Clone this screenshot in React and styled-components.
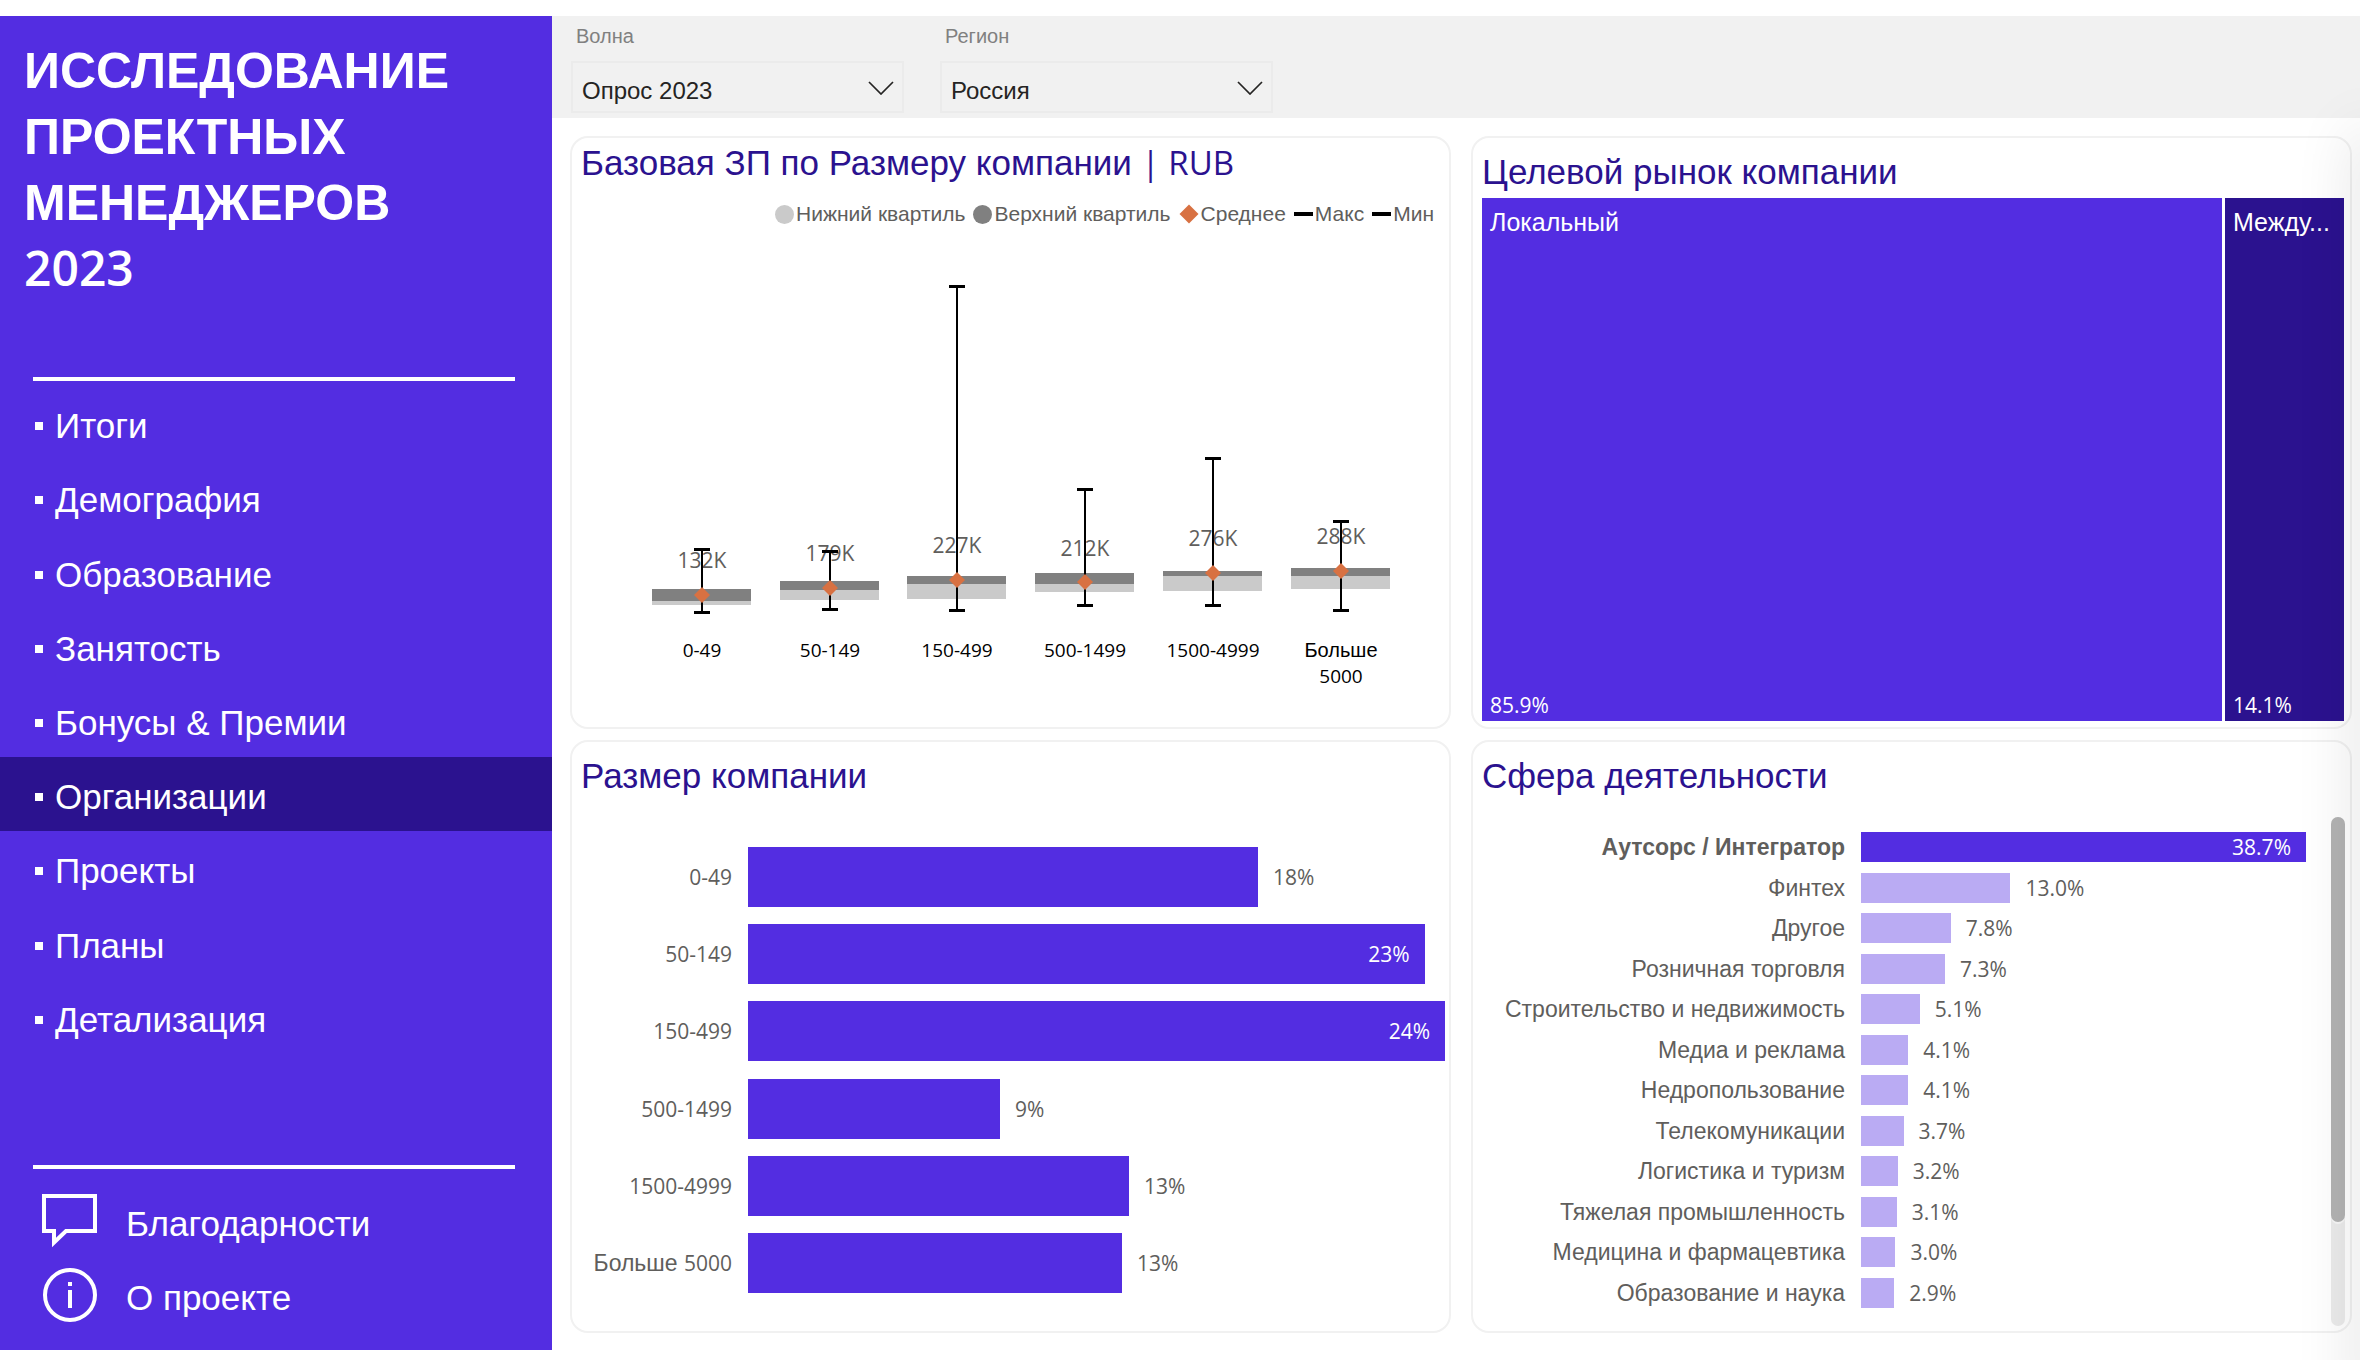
import React from "react";
import styled, { createGlobalStyle } from "styled-components";

const colors = {
  primary: "#532de1",
  dark: "#2b128f",
  light: "#baabf3",
  text: "#605e5c",
  line: "#f1f1f1",
};

const cyrillic = `"Liberation Sans", sans-serif`;
const digits = `"Open Sans", "Noto Sans", sans-serif`;

const menu = [
  "Итоги",
  "Демография",
  "Образование",
  "Занятость",
  "Бонусы & Премии",
  "Организации",
  "Проекты",
  "Планы",
  "Детализация",
];

const sizes = [
  { prefix: "", label: "0-49", share: 17.56, value: "18%" },
  { prefix: "", label: "50-149", share: 23.3, value: "23%", inside: true },
  { prefix: "", label: "150-499", share: 24, value: "24%", inside: true },
  { prefix: "", label: "500-1499", share: 8.68, value: "9%" },
  { prefix: "", label: "1500-4999", share: 13.12, value: "13%" },
  { prefix: "Больше ", label: "5000", share: 12.88, value: "13%" },
];

const spheres = [
  { label: "Аутсорс / Интегратор", value: 38.7, active: true },
  { label: "Финтех", value: 13.0 },
  { label: "Другое", value: 7.8 },
  { label: "Розничная торговля", value: 7.3 },
  { label: "Строительство и недвижимость", value: 5.1 },
  { label: "Медиа и реклама", value: 4.1 },
  { label: "Недропользование", value: 4.1 },
  { label: "Телекомуникации", value: 3.7 },
  { label: "Логистика и туризм", value: 3.2 },
  { label: "Тяжелая промышленность", value: 3.1 },
  { label: "Медицина и фармацевтика", value: 3.0 },
  { label: "Образование и наука", value: 2.9 },
];

const boxes = [
  { label: "0-49", x: 130, max: 310, q3: 349, q2: 361, q1: 365, min: 373, avg: 355, text: "132K", ty: 328 },
  { label: "50-149", x: 258, max: 312, q3: 341, q2: 350, q1: 360, min: 370, avg: 348, text: "179K", ty: 321 },
  { label: "150-499", x: 385, max: 47, q3: 336, q2: 344, q1: 359, min: 371, avg: 340, text: "227K", ty: 313 },
  { label: "500-1499", x: 513, max: 250, q3: 333, q2: 344, q1: 352, min: 366, avg: 342, text: "212K", ty: 316 },
  { label: "1500-4999", x: 641, max: 219, q3: 331, q2: 336, q1: 351, min: 366, avg: 333, text: "276K", ty: 306 },
  { label: "Больше", second: "5000", x: 769, max: 282, q3: 328, q2: 336, q1: 349, min: 371, avg: 331, text: "288K", ty: 304 },
];

const BoxPlot = () => (
  <Plot viewBox="0 0 877 480" role="img" aria-label="Базовая ЗП">
    {boxes.map((b) => (
      <g key={b.label}>
        <PlotValue x={b.x} y={b.ty}>
          {b.text}
        </PlotValue>
        <rect x={b.x - 50} y={b.q3} width="99" height={b.q2 - b.q3} fill="#808080" />
        <rect x={b.x - 50} y={b.q2} width="99" height={b.q1 - b.q2} fill="#cacaca" />
        <rect x={b.x - 1} y={b.max} width="2" height={b.min - b.max} />
        <rect x={b.x - 8} y={b.max - 2} width="16" height="3" />
        <rect x={b.x - 8} y={b.min - 2} width="16" height="3" />
        <path
          d={`M${b.x} ${b.avg - 8}l8 8l-8 8l-8 -8z`}
          fill="#d87142"
        />
        <PlotLabel x={b.x} y="417" $cyr={Boolean(b.second)}>
          {b.label}
        </PlotLabel>
        {b.second && (
          <PlotLabel x={b.x} y="443">
            {b.second}
          </PlotLabel>
        )}
      </g>
    ))}
  </Plot>
);

const Filter = ({ id, label, value }) => (
  <Field>
    <label htmlFor={id}>{label}</label>
    <div className="box">
      <select id={id} defaultValue={value}>
        <option>{value}</option>
      </select>
      <svg width="26" height="14" viewBox="0 0 26 14" fill="none" stroke="#252423" strokeWidth="1.7">
        <path d="M1 1l12 12l12 -12" />
      </svg>
    </div>
  </Field>
);

const App = () => {
  return (
    <Page>
      <GlobalStyle />
      <Sidebar>
        <h1>
          Исследование
          <br />
          проектных
          <br />
          менеджеров
          <br />
          <b>2023</b>
        </h1>
        <Divider />
        <Menu>
          {menu.map((item) => (
            <MenuLink key={item} href="#" $active={item === "Организации"}>
              {item}
            </MenuLink>
          ))}
        </Menu>
        <Divider />
        <Footer>
          <a href="#">
            <svg width="56" height="60" viewBox="0 0 56 60" fill="none" stroke="#fff" strokeWidth="4">
              <path d="M2 2h51v35H24L12 48.500V37H2z" />
            </svg>
            Благодарности
          </a>
          <a href="#">
            <svg width="56" height="60" viewBox="0 0 56 60" fill="none" stroke="#fff" strokeWidth="4">
              <circle cx="28" cy="27" r="25" />
              <path d="M28 22v18M28 14v4" />
            </svg>
            О проекте
          </a>
        </Footer>
      </Sidebar>
      <Content>
        <Filters>
          <Filter id="wave" label="Волна" value="Опрос 2023" />
          <Filter id="region" label="Регион" value="Россия" />
        </Filters>
        <Cards>
          <Card>
            <Title>
              Базовая ЗП по Размеру компании <Latin>| RUB</Latin>
            </Title>
            <Legend>
              <li>
                <Dot $color="#cacaca" />
                Нижний квартиль
              </li>
              <li>
                <Dot $color="#808080" />
                Верхний квартиль
              </li>
              <li>
                <svg width="20" height="20" viewBox="0 0 20 20">
                  <path d="M10 0.500l9.500 9.500l-9.500 9.500l-9.500 -9.500z" fill="#d87142" />
                </svg>
                Среднее
              </li>
              <li>
                <Dash />
                Макс
              </li>
              <li>
                <Dash />
                Мин
              </li>
            </Legend>
            <BoxPlot />
          </Card>
          <Card>
            <Title $low>Целевой рынок компании</Title>
            <Treemap>
              <Tile $color={colors.primary}>
                <span>Локальный</span>
                <Num>85.9%</Num>
              </Tile>
              <Tile $color={colors.dark}>
                <span>Между...</span>
                <Num>14.1%</Num>
              </Tile>
            </Treemap>
          </Card>
          <Card>
            <Title $low>Размер компании</Title>
            <SizeChart>
              {sizes.map((s) => (
                <SizeRow key={s.label}>
                  <BarLabel>
                    {s.prefix}
                    <Num>{s.label}</Num>
                  </BarLabel>
                  <Track>
                    <Bar $color={colors.primary} $height={60} style={{ width: `${(s.share / 24) * 100}%` }}>
                      {s.inside && <Num>{s.value}</Num>}
                    </Bar>
                    {!s.inside && <Num>{s.value}</Num>}
                  </Track>
                </SizeRow>
              ))}
            </SizeChart>
          </Card>
          <Card>
            <Title $low>Сфера деятельности</Title>
            <SphereBody>
              <SphereChart>
                {spheres.map((s) => (
                  <SphereRow key={s.label}>
                    <BarLabel $active={s.active}>{s.label}</BarLabel>
                    <Track>
                      <Bar
                        $color={s.active ? colors.primary : colors.light}
                        $height={30}
                        style={{ width: `${(s.value / 38.7) * 100}%` }}
                      >
                        {s.active && <Num>{s.value.toFixed(1)}%</Num>}
                      </Bar>
                      {!s.active && <Num>{s.value.toFixed(1)}%</Num>}
                    </Track>
                  </SphereRow>
                ))}
              </SphereChart>
              <Scrollbar>
                <div />
              </Scrollbar>
            </SphereBody>
          </Card>
        </Cards>
      </Content>
      <EdgeShadow />
    </Page>
  );
};

export default App;

const GlobalStyle = createGlobalStyle`
  * {
    box-sizing: border-box;
  }
  body {
    margin: 0;
    background: #fff;
    color: ${colors.text};
    font-family: ${cyrillic};
    overflow-x: hidden;
  }
  a {
    color: inherit;
    text-decoration: none;
  }
`;

const Page = styled.div`
  position: relative;
  display: flex;
  padding: 16px 0 10px;
  overflow: hidden;
`;

const Sidebar = styled.aside`
  flex: 0 0 552px;
  display: flex;
  flex-direction: column;
  background: ${colors.primary};
  color: #fff;
  h1 {
    margin: 0;
    padding: 22px 24px 0;
    height: 361px;
    font-size: 50px;
    line-height: 66px;
    font-weight: 700;
    text-transform: uppercase;
  }
  b {
    font-family: ${digits};
    font-size: 48px;
    font-weight: 600;
    line-height: 1;
  }
`;

const Divider = styled.hr`
  flex: none;
  width: 482px;
  height: 4px;
  margin: 0 0 0 33px;
  border: 0;
  background: #fff;
`;

const Menu = styled.nav`
  display: flex;
  flex-direction: column;
  height: 784px;
  padding: 5px 0 111px;
`;

const MenuLink = styled.a`
  flex: 1;
  display: flex;
  align-items: center;
  gap: 12px;
  padding: 6px 0 0 35px;
  font-size: 35px;
  background: ${(p) => (p.$active ? colors.dark : "transparent")};
  &::before {
    content: "";
    width: 8px;
    height: 8px;
    background: #fff;
  }
`;

const Footer = styled.div`
  padding: 18px 0 15px 42px;
  font-size: 35px;
  a {
    display: flex;
    align-items: center;
    gap: 28px;
    height: 74px;
  }
`;

const Content = styled.main`
  flex: 1;
  min-width: 0;
`;

const Filters = styled.div`
  display: flex;
  gap: 36px;
  height: 102px;
  padding: 8px 0 0 19px;
  background: ${colors.line};
`;

const Field = styled.div`
  width: 333px;
  label {
    display: block;
    height: 37px;
    padding-left: 5px;
    font-size: 20px;
    line-height: 24px;
    color: #808080;
  }
  .box {
    position: relative;
  }
  select {
    appearance: none;
    width: 100%;
    height: 52px;
    padding: 6px 9px 0;
    border: 2px solid #ebebeb;
    border-radius: 0;
    background: transparent;
    color: #252423;
    font-family: ${cyrillic};
    font-size: 24px;
  }
  svg {
    position: absolute;
    right: 10px;
    top: 20px;
    pointer-events: none;
  }
`;

const Cards = styled.div`
  display: grid;
  grid-template-columns: 1fr 1fr;
  grid-auto-rows: 593px;
  gap: 11px 20px;
  padding: 18px 8px 0 18px;
`;

const Card = styled.section`
  display: flex;
  flex-direction: column;
  min-width: 0;
  border: 2px solid ${colors.line};
  border-radius: 18px;
`;

const Title = styled.h2`
  margin: 0;
  padding: ${(p) => (p.$low ? "13px" : "4px")} 9px 0;
  font-size: 35px;
  line-height: 42px;
  font-weight: 400;
  color: ${colors.dark};
`;

const Latin = styled.span`
  font-family: ${digits};
  font-size: 33px;
  line-height: 1;
`;

const Num = styled.span`
  font-family: ${digits};
  font-size: 21px;
  line-height: 28px;
`;

const Legend = styled.ul`
  display: flex;
  justify-content: flex-end;
  gap: 8px;
  margin: 0;
  padding: 18px 15px 0;
  list-style: none;
  font-size: 21px;
  line-height: 24px;
  li {
    display: flex;
    align-items: center;
    gap: 2px;
  }
`;

const Dot = styled.i`
  width: 19px;
  height: 19px;
  border-radius: 50%;
  background: ${(p) => p.$color};
`;

const Dash = styled.i`
  width: 19px;
  height: 4px;
  background: #000;
`;

const Plot = styled.svg`
  display: block;
  width: 100%;
  margin-top: 14px;
`;

const PlotValue = styled.text`
  font-family: ${digits};
  font-size: 21px;
  text-anchor: middle;
  fill: ${colors.text};
`;

const PlotLabel = styled.text`
  font-family: ${(p) => (p.$cyr ? cyrillic : digits)};
  font-size: ${(p) => (p.$cyr ? 20 : 19)}px;
  text-anchor: middle;
  fill: #000;
`;

const Treemap = styled.div`
  flex: 1;
  display: grid;
  grid-template-columns: 740fr 119fr;
  gap: 3px;
  margin: 5px 6px 6px 9px;
`;

const Tile = styled.div`
  min-width: 0;
  display: flex;
  flex-direction: column;
  justify-content: space-between;
  padding: 10px 8px 2px;
  background: ${(p) => p.$color};
  color: #fff;
  font-size: 25px;
  line-height: 28px;
  white-space: nowrap;
`;

const BarLabel = styled.span`
  text-align: right;
  white-space: nowrap;
  font-size: 23px;
  line-height: 28px;
  font-weight: ${(p) => (p.$active ? 700 : 400)};
`;

const Track = styled.div`
  display: flex;
  align-items: center;
  gap: 15px;
`;

const Bar = styled.div`
  flex: none;
  display: flex;
  align-items: center;
  justify-content: flex-end;
  height: ${(p) => p.$height}px;
  padding-right: 15px;
  background: ${(p) => p.$color};
  color: #fff;
`;

const SizeChart = styled.div`
  flex: 1;
  display: grid;
  grid-template-rows: repeat(6, 1fr);
  padding: 41px 4px 29px 0;
`;

const SizeRow = styled.div`
  display: grid;
  grid-template-columns: 160px 1fr;
  gap: 16px;
  align-items: center;
`;

const SphereBody = styled.div`
  flex: 1;
  display: flex;
  padding: 20px 5px 5px 0;
`;

const SphereChart = styled.div`
  flex: 1;
  display: grid;
  grid-template-rows: repeat(12, 1fr);
  padding: 10px 25px 13px 0;
`;

const SphereRow = styled.div`
  display: grid;
  grid-template-columns: 372px 1fr;
  gap: 16px;
  align-items: center;
`;

const Scrollbar = styled.div`
  width: 14px;
  border-radius: 7px;
  background: #ebebeb;
  div {
    height: 405px;
    border-radius: 7px;
    background: #b3b3b3;
    box-shadow: 0 2px 0 #f7f7f7;
  }
`;

const EdgeShadow = styled.div`
  position: absolute;
  top: 130px;
  right: -20px;
  bottom: -60px;
  width: 20px;
  box-shadow: 0 0 60px rgba(0, 0, 0, 0.2);
  pointer-events: none;
`;
